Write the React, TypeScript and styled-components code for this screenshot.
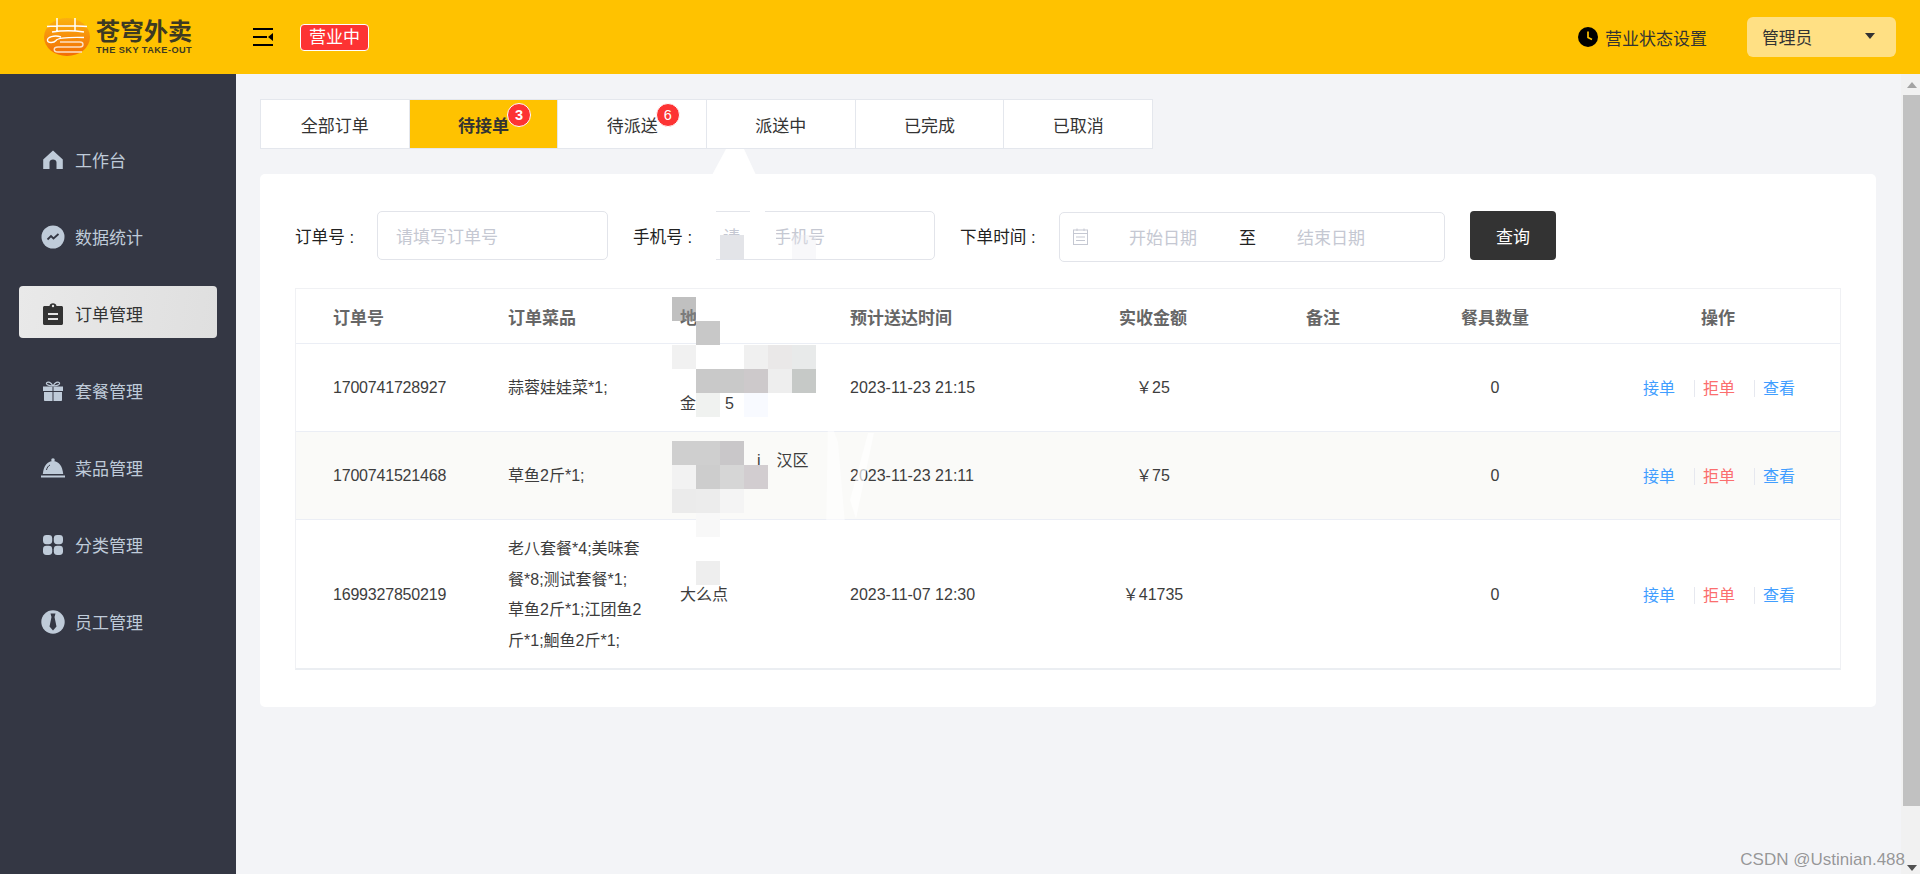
import React from 'react'
import styled, { createGlobalStyle } from 'styled-components'

const GlobalStyle = createGlobalStyle`
  html, body {
    margin: 0;
    padding: 0;
    height: 100%;
    overflow: hidden;
    background: #f3f4f7;
    font-family: "Liberation Sans", "Noto Sans CJK SC", sans-serif;
  }
  * { box-sizing: border-box; }
`

const Page = styled.div`
  position: relative;
  width: 1920px;
  height: 874px;
  display: flex;
  flex-direction: column;
  overflow: hidden;
`

/* header */
const Header = styled.header`
  height: 74px;
  flex: none;
  background: #ffc200;
  display: flex;
  align-items: center;
  padding-left: 44px;
  padding-right: 24px;
`
const Logo = styled.div`
  display: flex;
  align-items: center;
  gap: 6px;
  width: 209px;
`
const LogoText = styled.div`
  display: flex;
  flex-direction: column;
  width: 98px;
  color: #3d3a22;
`
const LogoName = styled.div`
  font-size: 24px;
  line-height: 26px;
  font-weight: 700;
  white-space: nowrap;
`
const LogoSub = styled.div`
  font-size: 9.2px;
  line-height: 11px;
  font-weight: 700;
  white-space: nowrap;
  letter-spacing: 0.45px;
`
const Status = styled.div`
  margin-left: 27px;
  width: 69px;
  height: 27px;
  border: 1px solid #fff;
  border-radius: 4px;
  background: #fd3333;
  color: #fff;
  font-size: 17px;
  line-height: 25px;
  text-align: center;
`
const HeaderRight = styled.div`
  margin-left: auto;
  display: flex;
  align-items: center;
`
const Setting = styled.div`
  display: flex;
  align-items: center;
  gap: 7px;
  font-size: 17px;
  color: #333;
  margin-right: 40px;
`
const UserMenu = styled.div`
  width: 149px;
  height: 40px;
  background: #ffe084;
  border-radius: 6px;
  display: flex;
  align-items: center;
  justify-content: space-between;
  padding: 0 21px 0 15px;
  font-size: 16.8px;
  color: #333;
`
const Caret = styled.i`
  width: 0;
  height: 0;
  border-left: 5px solid transparent;
  border-right: 5px solid transparent;
  border-top: 6px solid #333;
  margin-top: -2px;
`

/* sidebar */
const Body = styled.div`
  flex: 1;
  display: flex;
  min-height: 0;
`
const Sidebar = styled.nav`
  width: 236px;
  flex: none;
  background: #343744;
  padding: 58px 19px 0;
  display: flex;
  flex-direction: column;
  gap: 25px;
`
const NavItem = styled.div<{ $active?: boolean }>`
  height: 52px;
  border-radius: 4px;
  display: flex;
  align-items: center;
  gap: 10px;
  padding: 3px 0 0 22px;
  font-size: 17px;
  color: ${(p) => (p.$active ? '#333' : '#bfcbd9')};
  background: ${(p) => (p.$active ? 'linear-gradient(100deg, #e9e9e9, #dfdfdf)' : 'none')};
`
const NavIcon = styled.span`
  width: 24px;
  height: 24px;
  flex: none;
  display: flex;
  align-items: center;
  justify-content: center;
`

/* content */
const Main = styled.main`
  flex: 1;
  padding: 25px 25px 0 24px;
  background: #f3f4f7;
`
const Tabs = styled.div`
  display: flex;
  width: 893px;
  height: 50px;
  background: #fff;
  border: 1px solid #e4e7ed;
`
const Tab = styled.div<{ $active?: boolean }>`
  flex: 1;
  display: flex;
  align-items: center;
  justify-content: center;
  font-size: 17px;
  color: #333;
  border-left: 1px solid #e4e7ed;
  &:first-child { border-left: 0; }
  font-weight: ${(p) => (p.$active ? 700 : 400)};
  background: ${(p) => (p.$active ? '#ffc200' : '#fff')};
`
const TabLabel = styled.span`
  position: relative;
`
const Badge = styled.em`
  position: absolute;
  left: calc(100% - 2px);
  top: -9px;
  width: 24px;
  height: 24px;
  border-radius: 50%;
  border: 1px solid #fff;
  background: #fd3333;
  color: #fff;
  font-style: normal;
  font-size: 14.5px;
  line-height: 22px;
  text-align: center;
`
const Card = styled.section`
  margin-top: 25px;
  background: #fff;
  border-radius: 5px;
  padding: 37px 35px 37px;
`
const Filters = styled.div`
  display: flex;
  align-items: center;
  height: 49px;
  margin-bottom: 28px;
`
const Label = styled.label<{ $w: number; $lead?: number }>`
  flex: none;
  width: ${(p) => p.$w}px;
  margin-left: ${(p) => p.$lead ?? 0}px;
  font-size: 16.6px;
  color: #222;
  white-space: nowrap;
`
const Field = styled.div`
  width: 231px;
  height: 49px;
  border: 1px solid #e2e4ea;
  border-radius: 5px;
  padding-left: 18px;
  display: flex;
  align-items: center;
  font-size: 17px;
  color: #c5c8d2;
`
const DateField = styled.div`
  width: 386px;
  height: 50px;
  margin-top: 2px;
  border: 1px solid #e2e4ea;
  border-radius: 5px;
  padding-left: 13px;
  display: flex;
  align-items: center;
  font-size: 17px;
  color: #c5c8d2;
`
const DateText = styled.span<{ $left: number }>`
  margin-left: ${(p) => p.$left}px;
`
const DateTo = styled.span`
  margin-left: 42px;
  color: #222;
`
const Search = styled.button`
  margin-left: 25px;
  width: 86px;
  height: 49px;
  border: 0;
  border-radius: 4px;
  background: #333;
  color: #fff;
  font-family: inherit;
  font-size: 17px;
`

/* table */
const Table = styled.div`
  border-top: 1px solid #f0f1f4;
  border-right: 1px solid #f0f1f4;
  border-left: 1px solid #f0f1f4;
  border-bottom: 2px solid #ebeef2;
  width: 1546px;
`
const columns = '202px 172px 170px 221px 184px 156px 188px 1fr'
const HeadRow = styled.div`
  display: grid;
  grid-template-columns: ${columns};
  height: 55px;
  align-items: center;
  font-size: 17px;
  font-weight: 700;
  color: #666;
  border-bottom: 1px solid #ebeef5;
`
const Row = styled.div<{ $h: number; $stripe?: boolean }>`
  display: grid;
  grid-template-columns: ${columns};
  height: ${(p) => p.$h}px;
  padding-top: 2px;
  align-items: center;
  font-size: 16px;
  line-height: 30.5px;
  color: #3d3d3d;
  background: ${(p) => (p.$stripe ? '#fafaf8' : '#fff')};
  border-bottom: 1px solid #ebeef5;
  &:last-child { border-bottom: 0; }
`
const Cell = styled.div<{ $center?: boolean; $first?: boolean; $shift?: number }>`
  padding-left: ${(p) => (p.$center ? (p.$shift ?? 0) : p.$first ? 37 : 10)}px;
  text-align: ${(p) => (p.$center ? 'center' : 'left')};
`
const OrderNo = styled(Cell)`
  letter-spacing: -0.2px;
`
const Gap = styled.span<{ $w: number }>`
  display: inline-block;
  width: ${(p) => p.$w}px;
`
const Actions = styled.div`
  display: flex;
  justify-content: center;
  padding-left: 9px;
  line-height: 17px;
`
const Action = styled.span<{ $danger?: boolean; $last?: boolean }>`
  font-size: 16px;
  color: ${(p) => (p.$danger ? '#fb6e6e' : '#419eff')};
  padding: 0 ${(p) => (p.$last ? 0 : 19)}px 0 8px;
  border-right: ${(p) => (p.$last ? '0' : '1px solid #e6e8ef')};
  &:first-child { padding-left: 0; }
`

/* scrollbar */
const ScrollTrack = styled.div`
  width: 20px;
  flex: none;
  background: #f1f1f1;
  padding: 0 1px 0 2px;
  display: flex;
  flex-direction: column;
  align-items: center;
`
const ScrollUp = styled.i`
  flex: none;
  margin: 8px 0 7px;
  width: 0;
  height: 0;
  border-left: 5px solid transparent;
  border-right: 5px solid transparent;
  border-bottom: 6px solid #a3a3a3;
`
const ScrollThumb = styled.div`
  flex: none;
  width: 17px;
  height: 711px;
  background: #c1c1c1;
`
const ScrollDown = styled.i`
  flex: none;
  margin-top: auto;
  margin-bottom: 3px;
  width: 0;
  height: 0;
  border-left: 5px solid transparent;
  border-right: 5px solid transparent;
  border-top: 6px solid #505050;
`

/* overlays: redaction mosaic and watermark */
const Block = styled.div`
  position: absolute;
  width: 24px;
  height: 24px;
`
const Smear = styled.svg`
  position: absolute;
  left: 0;
  top: 0;
  pointer-events: none;
`
const Watermark = styled.div`
  position: absolute;
  right: 15px;
  bottom: 4px;
  font-size: 17px;
  line-height: 20px;
  color: rgba(90, 90, 90, 0.62);
  z-index: 3;
`

const HomeIcon = () => (
  <svg width="20" height="20" viewBox="0 0 20 20" fill="#bfcbd9">
    <path d="M10 .5 19.8 9.5V19H13.5V12.5C13.5 10.8 12 9.5 10 9.5S6.5 10.8 6.5 12.5V19H.2V9.5Z" />
  </svg>
)
const ChartIcon = () => (
  <svg width="24" height="24" viewBox="0 0 24 24">
    <circle cx="12" cy="12" r="11.5" fill="#bfcbd9" />
    <path d="M6.5 14.5 10 11l2.5 2.5L17.5 9" fill="none" stroke="#343744" strokeWidth="1.8" />
  </svg>
)
const ClipboardIcon = () => (
  <svg width="20" height="22" viewBox="0 0 20 22">
    <path d="M1.5 3H6.5C6.7 1.3 8.2.3 10 .3S13.3 1.3 13.5 3H18.5C19.3 3 20 3.7 20 4.5V20.5C20 21.3 19.3 22 18.5 22H1.5C.7 22 0 21.3 0 20.5V4.5C0 3.7.7 3 1.5 3Z" fill="#333" />
    <rect x="5" y="10" width="10" height="2" fill="#e4e4e4" />
    <rect x="5" y="15" width="10" height="2" fill="#e4e4e4" />
    <circle cx="10" cy="3" r="1.2" fill="#e4e4e4" />
  </svg>
)
const GiftIcon = () => (
  <svg width="20" height="20" viewBox="0 0 20 20">
    <path d="M10 5C8 1 5 .5 3.8 1.6 2.6 2.8 4.5 5 10 5ZM10 5C12 1 15 .5 16.2 1.6 17.4 2.8 15.5 5 10 5Z" fill="none" stroke="#bfcbd9" strokeWidth="1.2" />
    <path d="M0 5.5H9.5V10H0ZM10.5 5.5H20V10H10.5ZM1 11H9.5V20H1.8C1.3 20 1 19.6 1 19.2ZM10.5 11H19V19.2C19 19.6 18.7 20 18.2 20H10.5Z" fill="#bfcbd9" />
  </svg>
)
const ClocheIcon = () => (
  <svg width="24" height="20" viewBox="0 0 24 20" fill="#bfcbd9">
    <circle cx="12" cy="2" r="1.8" />
    <path d="M12 3C6.5 3 2.5 8 1.8 16H22.2C21.5 8 17.5 3 12 3Z" />
    <rect x="0" y="17.5" width="24" height="2" />
    <path d="M5.5 12C6 9.5 7.2 8 9 7" fill="none" stroke="#343744" strokeWidth="1" />
  </svg>
)
const GridIcon = () => (
  <svg width="20" height="20" viewBox="0 0 20 20" fill="#bfcbd9">
    <rect x="0" y="0" width="9.2" height="9.2" rx="3.4" />
    <rect x="10.8" y="0" width="9.2" height="9.2" rx="3.4" />
    <rect x="0" y="10.8" width="9.2" height="9.2" rx="3.4" />
    <rect x="10.8" y="10.8" width="9.2" height="9.2" rx="3.4" />
  </svg>
)
const TieIcon = () => (
  <svg width="24" height="24" viewBox="0 0 24 24">
    <circle cx="12" cy="12" r="11.7" fill="#bfcbd9" />
    <path d="M9.5 3.5H14.5L13.5 7 15.5 16.5 12 20.5 8.5 16.5 10.5 7Z" fill="#343744" />
  </svg>
)
const MenuIcon = () => (
  <svg width="20" height="18" viewBox="0 0 20 18" fill="#000">
    <rect x="0" y="0" width="20" height="2" />
    <rect x="0" y="8" width="14" height="2" />
    <rect x="0" y="16" width="20" height="2" />
    <path d="M20 5V13L15 9Z" />
  </svg>
)
const ClockIcon = () => (
  <svg width="20" height="20" viewBox="0 0 20 20">
    <circle cx="10" cy="10" r="10" fill="#000" />
    <path d="M10 4.5V10.5L14 12.5" fill="none" stroke="#ffc200" strokeWidth="1.7" />
  </svg>
)
const CalendarIcon = () => (
  <svg width="15" height="17" viewBox="0 0 15 17" fill="none" stroke="#c5c8d2" strokeWidth="1">
    <rect x=".5" y="2" width="14" height="14.5" />
    <path d="M.5 5.5H14.5M3 9H12M3 12.5H12M4 .5V3M11 .5V3" />
  </svg>
)
const LogoMark = () => (
  <svg width="46" height="38" viewBox="0 0 46 38">
    <defs>
      <linearGradient id="logo" x1="0" y1="0" x2="0" y2="1">
        <stop offset="0" stopColor="#fbb110" />
        <stop offset="1" stopColor="#f26c05" />
      </linearGradient>
    </defs>
    <ellipse cx="23" cy="19" rx="23" ry="19" fill="url(#logo)" />
    <path d="M3 8.5C8 7.5 13 8 23 8S38 7.5 43 8.5M13 0V13M31 0V13M8 14C18 12.5 30 12.5 40 14" fill="none" stroke="#fff" strokeWidth="1.5" />
    <path d="M17 19C10 16.5 3 19.5 3.5 22.5S10 25 12 22.5C13 21 18 19 40 19.5" fill="none" stroke="#fff" strokeWidth="1.4" />
    <path d="M16 24H36C40 24 40 29 36 29H14C9 29 9 34 14 34H38" fill="none" stroke="#fde0c4" strokeWidth="1.4" />
  </svg>
)

const navItems = [
  { label: '工作台', icon: <HomeIcon /> },
  { label: '数据统计', icon: <ChartIcon /> },
  { label: '订单管理', icon: <ClipboardIcon />, active: true },
  { label: '套餐管理', icon: <GiftIcon /> },
  { label: '菜品管理', icon: <ClocheIcon /> },
  { label: '分类管理', icon: <GridIcon /> },
  { label: '员工管理', icon: <TieIcon /> },
]

const tabs = [
  { label: '全部订单' },
  { label: '待接单', count: 3, active: true },
  { label: '待派送', count: 6 },
  { label: '派送中' },
  { label: '已完成' },
  { label: '已取消' },
]

const headers = ['订单号', '订单菜品', '地址', '预计送达时间']

const longDishes = ['老八套餐*4;美味套', '餐*8;测试套餐*1;', '草鱼2斤*1;江团鱼2', '斤*1;鮰鱼2斤*1;']

// x, y, colour of each mosaic square over the address column
const mosaic: [number, number, string][] = [
  [720, 235, '#e3e4e8'], [792, 235, 'rgba(235,235,240,.35)'],
  [672, 297, 'rgba(140,140,140,.55)'], [696, 297, '#fff'], [720, 297, '#fff'],
  [696, 321, '#c8c8c8'],
  [672, 345, '#f1f1f1'], [744, 345, '#f0f0f0'], [768, 345, '#eae8e8'], [792, 345, '#e8eaea'],
  [696, 369, '#c9c9c9'], [720, 369, '#c9c9c9'], [744, 369, '#cdc9cb'], [768, 369, '#eeeeee'], [792, 369, '#c6c9c7'],
  [696, 393, '#f0f2f0'], [744, 393, '#f8faff'],
  [672, 441, '#cfcfcf'], [696, 441, '#cfcfcf'], [720, 441, '#c9c7c9'],
  [672, 465, '#f2f2f2'], [696, 465, '#cdcdcd'], [720, 465, '#d6d6d6'], [744, 465, '#d2cdd0'],
  [672, 489, '#ebebeb'], [696, 489, '#ececec'], [720, 489, '#f4f4f4'],
  [696, 513, '#f8f8f8'],
  [696, 561, '#eeeeee'],
]

const RowActions = () => (
  <Actions>
    <Action>接单</Action>
    <Action $danger>拒单</Action>
    <Action $last>查看</Action>
  </Actions>
)

export default function App() {
  return (
    <Page>
      <GlobalStyle />
      <Header>
        <Logo>
          <LogoMark />
          <LogoText>
            <LogoName>苍穹外卖</LogoName>
            <LogoSub>THE SKY TAKE-OUT</LogoSub>
          </LogoText>
        </Logo>
        <MenuIcon />
        <Status>营业中</Status>
        <HeaderRight>
          <Setting>
            <ClockIcon />
            营业状态设置
          </Setting>
          <UserMenu>
            管理员
            <Caret />
          </UserMenu>
        </HeaderRight>
      </Header>
      <Body>
        <Sidebar>
          {navItems.map((item) => (
            <NavItem key={item.label} $active={item.active}>
              <NavIcon>{item.icon}</NavIcon>
              {item.label}
            </NavItem>
          ))}
        </Sidebar>
        <Main>
          <Tabs>
            {tabs.map((tab) => (
              <Tab key={tab.label} $active={tab.active}>
                <TabLabel>
                  {tab.label}
                  {tab.count && <Badge>{tab.count}</Badge>}
                </TabLabel>
              </Tab>
            ))}
          </Tabs>
          <Card>
            <Filters>
              <Label $w={82}>订单号 :</Label>
              <Field>请填写订单号</Field>
              <Label $w={71} $lead={25}>手机号 :</Label>
              <Field>请填写手机号</Field>
              <Label $w={99} $lead={25}>下单时间 :</Label>
              <DateField>
                <CalendarIcon />
                <DateText $left={41}>开始日期</DateText>
                <DateTo>至</DateTo>
                <DateText $left={41}>结束日期</DateText>
              </DateField>
              <Search>查询</Search>
            </Filters>
            <Table>
              <HeadRow>
                {headers.map((h, i) => (
                  <Cell key={h} $first={i === 0}>{h}</Cell>
                ))}
                <Cell $center>实收金额</Cell>
                <Cell $center>备注</Cell>
                <Cell $center>餐具数量</Cell>
                <Cell $center $shift={7}>操作</Cell>
              </HeadRow>
              <Row $h={88}>
                <OrderNo $first>1700741728927</OrderNo>
                <Cell>蒜蓉娃娃菜*1;</Cell>
                <Cell>
                  <br />
                  金<Gap $w={29} />5
                </Cell>
                <Cell>2023-11-23 21:15</Cell>
                <Cell $center>￥25</Cell>
                <Cell />
                <Cell $center>0</Cell>
                <RowActions />
              </Row>
              <Row $h={88} $stripe>
                <OrderNo $first>1700741521468</OrderNo>
                <Cell>草鱼2斤*1;</Cell>
                <Cell>
                  <Gap $w={77} />j<Gap $w={16} />汉区
                  <br />
                  &nbsp;
                </Cell>
                <Cell>2023-11-23 21:11</Cell>
                <Cell $center>￥75</Cell>
                <Cell />
                <Cell $center>0</Cell>
                <RowActions />
              </Row>
              <Row $h={148}>
                <OrderNo $first>1699327850219</OrderNo>
                <Cell>
                  {longDishes.map((line) => (
                    <div key={line}>{line}</div>
                  ))}
                </Cell>
                <Cell>大么点</Cell>
                <Cell>2023-11-07 12:30</Cell>
                <Cell $center>￥41735</Cell>
                <Cell />
                <Cell $center>0</Cell>
                <RowActions />
              </Row>
            </Table>
          </Card>
        </Main>
        <ScrollTrack>
          <ScrollUp />
          <ScrollThumb />
          <ScrollDown />
        </ScrollTrack>
      </Body>
      <Smear width="1920" height="874" viewBox="0 0 1920 874">
        <path d="M726 149H744L756 175H712Z" fill="#fff" />
        <path d="M694 205H716V266H694Z" fill="#fff" />
        <path d="M740 222H776V252H740Z" fill="#fff" />
        <path d="M750 208H765V214H750Z" fill="#fff" />
        <path d="M828 415 838 442 846 535 826 535Z" fill="#fff" opacity=".55" />
        <path d="M850 500 868 433 874 433 856 519Z" fill="#fff" opacity=".7" />
      </Smear>
      {mosaic.map(([x, y, color]) => (
        <Block key={`${x}-${y}`} style={{ left: x, top: y, background: color }} />
      ))}
      <Watermark>CSDN @Ustinian.488</Watermark>
    </Page>
  )
}
